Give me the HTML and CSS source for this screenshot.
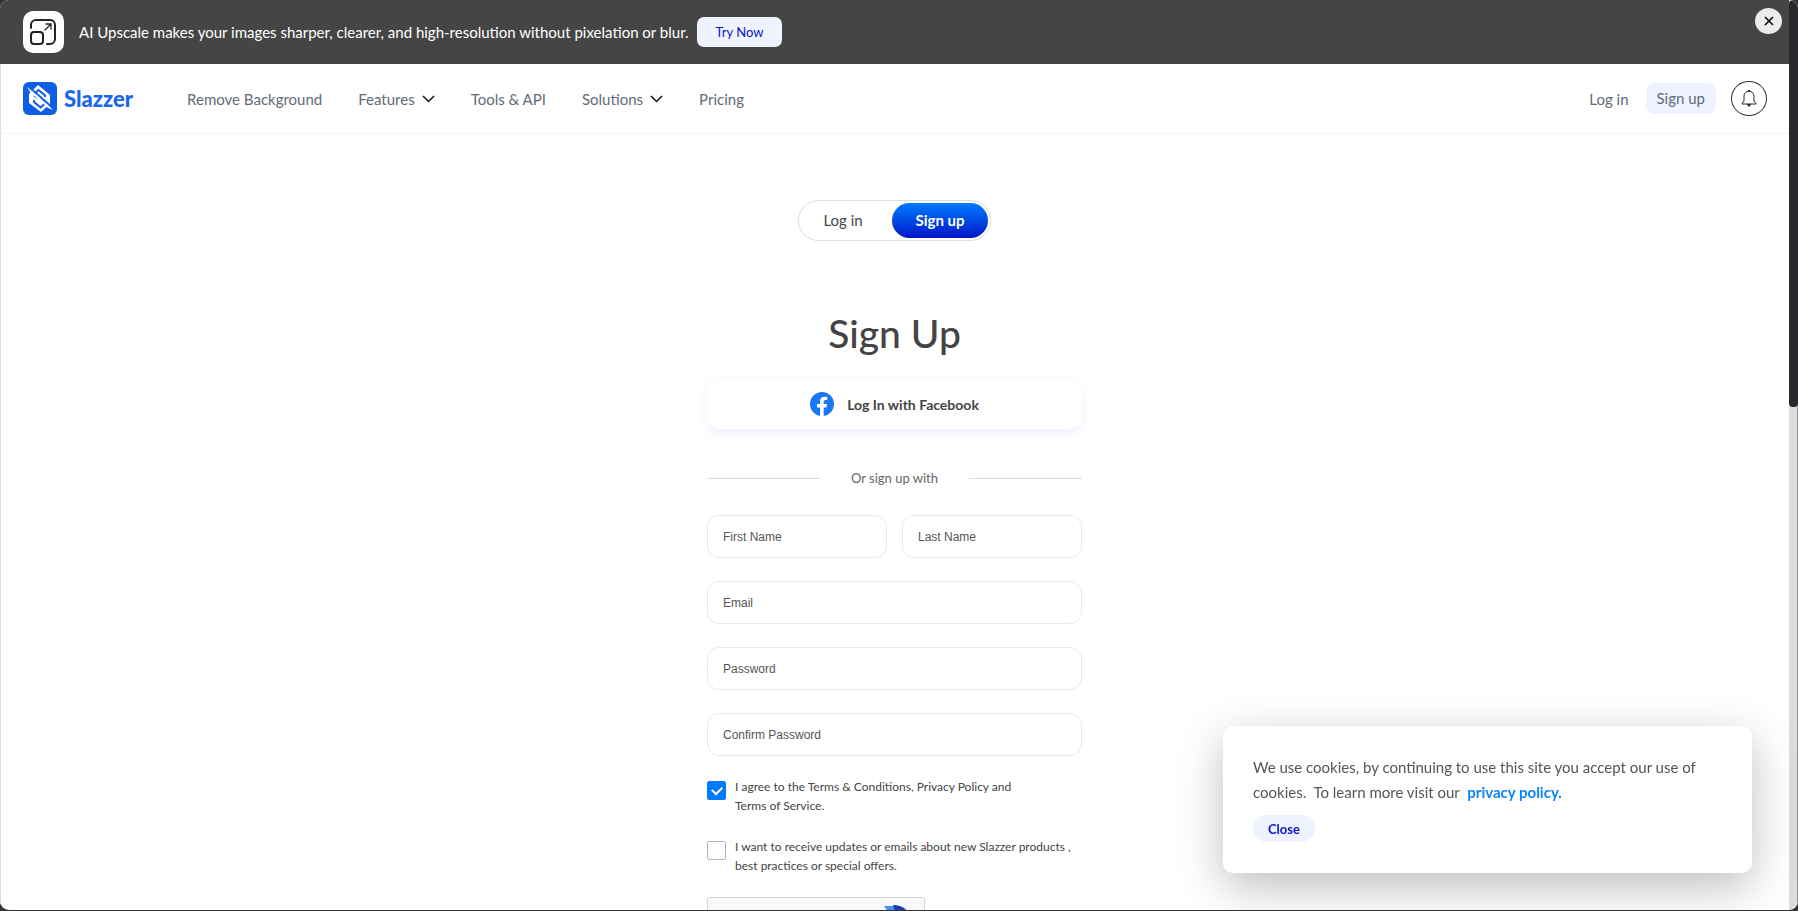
FILE: index.html
```html
<!DOCTYPE html>
<html lang="en">
<head>
    <meta charset="UTF-8">
    <meta name="viewport" content="width=device-width, initial-scale=1.0">
    <title>Sign Up | Slazzer</title>
    <link rel="stylesheet" href="styles.css">
</head>
<body>
    <div class="window">
        <div class="page">
            <div class="banner">
                <svg class="banner-icon" viewBox="0 0 41 42" fill="none" stroke="#222" stroke-width="2" stroke-linecap="round">
                    <rect width="41" height="42" rx="10" fill="#fff" stroke="none"/>
                    <path d="M8 17v-3a5 5 0 0 1 5-5h14a5 5 0 0 1 5 5v14a5 5 0 0 1-5 5h-3"/>
                    <rect x="8" y="21" width="12" height="12" rx="3"/>
                    <path d="M22 19l6-6M23 13h5v5" stroke-width="1.3"/>
                </svg>
                <p class="banner-text">AI Upscale makes your images sharper, clearer, and high-resolution without pixelation or blur.</p>
                <a class="try-now" href="#">Try Now</a>
                <button class="banner-close" type="button" aria-label="Close banner">
                    <svg width="10" height="10" viewBox="0 0 10 10" stroke="#111" stroke-width="1.7"><path d="M1 1l8 8M9 1l-8 8"/></svg>
                </button>
            </div>

            <header class="header">
                <a class="logo" href="#">
                    <svg width="34" height="33" viewBox="0 0 34 33">
                        <rect width="34" height="33" rx="6" fill="#0f5fe4"/>
                        <path d="M15 3L27 13V22L18 30L6 21V12Z" fill="#fff"/>
                        <path d="M22 15V13.500L15.500 8L11.500 11.500V14L21.500 20V22L17.500 25.500L11 20V18" fill="none" stroke="#0f5fe4" stroke-width="2"/>
                        <path d="M5 4L31 27" stroke="#0f5fe4" stroke-width="2"/>
                        <path d="M4 5L8 11L25 26L30 28L26 24L9 9Z" fill="#fff"/>
                    </svg>
                    <span>Slazzer</span>
                </a>
                <nav class="nav">
                    <a href="#">Remove Background</a>
                    <a href="#">Features
                        <svg width="13" height="8" viewBox="0 0 13 8" fill="none" stroke="#111" stroke-width="1.5"><path d="M1 1l5.500 5.500L12 1"/></svg>
                    </a>
                    <a href="#">Tools &amp; API</a>
                    <a href="#">Solutions
                        <svg width="13" height="8" viewBox="0 0 13 8" fill="none" stroke="#111" stroke-width="1.5"><path d="M1 1l5.500 5.500L12 1"/></svg>
                    </a>
                    <a href="#">Pricing</a>
                </nav>
                <div class="account">
                    <a class="login-link" href="#">Log in</a>
                    <a class="signup-link" href="#">Sign up</a>
                    <button class="bell" type="button" aria-label="Notifications">
                        <svg width="16" height="17" viewBox="0 0 16 17" fill="none" stroke="#222" stroke-width="1">
                            <path d="M8 1.200a5 5 0 0 0-5 5V11L1 13.500V14H15V13.500L13 11V6.200a5 5 0 0 0-5-5Z"/>
                            <path d="M6.500 14.500h3l-1.500 2Z" fill="#222"/>
                            <path d="M8 0v1.500" stroke-width="2"/>
                        </svg>
                    </button>
                </div>
            </header>

            <main class="signup">
                <div class="switch">
                    <a href="#">Log in</a>
                    <a class="active" href="#">Sign up</a>
                </div>

                <h1>Sign Up</h1>

                <form class="signup-form">
                    <button class="facebook" type="button">
                        <svg width="24" height="24" viewBox="0 0 24 24">
                            <circle cx="12" cy="12" r="12" fill="#1877f2"/>
                            <path d="M10 24V15.500H7V12h3V9.400C10 6.400 11.800 4.700 14.500 4.700c1.300 0 2.700.2 2.700.2v3h-1.500c-1.500 0-2 .9-2 1.900V12H17l-.5 3.500h-2.800V24Z" fill="#fff"/>
                        </svg>
                        Log In with Facebook
                    </button>

                    <div class="divider"><span>Or sign up with</span></div>

                    <div class="fields">
                        <input type="text" placeholder="First Name" aria-label="First Name">
                        <input type="text" placeholder="Last Name" aria-label="Last Name">
                        <input class="wide" type="email" placeholder="Email" aria-label="Email">
                        <input class="wide" type="password" placeholder="Password" aria-label="Password">
                        <input class="wide" type="password" placeholder="Confirm Password" aria-label="Confirm Password">
                    </div>

                    <div class="check">
                        <input type="checkbox" id="terms" checked>
                        <label for="terms">I agree to the <a href="#">Terms &amp; Conditions</a>, <a href="#">Privacy Policy</a> and<br><a href="#">Terms of Service.</a></label>
                    </div>
                    <div class="check">
                        <input type="checkbox" id="updates">
                        <label for="updates">I want to receive updates or emails about new Slazzer products ,<br>best practices or special offers.</label>
                    </div>

                    <div class="captcha">
                        <svg width="32" height="32" viewBox="0 0 32 32">
                            <path d="M4 1h13l-3 15Z" fill="#4a90f5"/>
                            <path d="M13 0C20 0 26 3 30 9L18 14Z" fill="#1c3aa9"/>
                        </svg>
                    </div>
                </form>
            </main>
        </div>
        <div class="scrollbar"><div class="thumb"></div></div>
    </div>

    <div class="cookies">
        <p>We use cookies, by continuing to use this site you accept our use of cookies.&nbsp; To learn more visit our <a href="#">privacy policy.</a></p>
        <button type="button">Close</button>
    </div>
</body>
</html>
```

FILE: styles.css
```css
* {
    box-sizing: border-box;
    margin: 0;
    padding: 0;
}

body {
    font-family: Lato, "Liberation Sans", sans-serif;
    font-size: 15px;
    color: #444;
    background-color: #333;
}

a {
    color: inherit;
    text-decoration: none;
}

button {
    font-family: inherit;
    border: none;
    cursor: pointer;
}

.window {
    display: flex;
    height: calc(100vh - 1px);
    overflow: hidden;
    background-color: #fff;
    border-radius: 9px;
}

.page {
    flex: 1;
    overflow: hidden;
}

.scrollbar {
    width: 9px;
    background-color: #dcdcdc;
    border-right: 1px solid #999;
}

.thumb {
    width: 9px;
    height: 407px;
    background-color: #29282d;
    border-radius: 4px;
}

/* top banner */
.banner {
    display: flex;
    align-items: center;
    height: 64px;
    padding: 0 7px 0 23px;
    background-color: #454545;
    color: #fff;
}

.banner-icon {
    width: 41px;
    height: 42px;
    margin-right: 15px;
}

.try-now {
    margin-left: 8px;
    padding: 0 19px;
    font-size: 13px;
    line-height: 30px;
    color: #0a14c4;
    background-color: #eff3ff;
    border-radius: 7px;
}

.banner-close {
    display: flex;
    align-items: center;
    justify-content: center;
    align-self: flex-start;
    width: 27px;
    height: 26px;
    margin: 8px 0 0 auto;
    background-color: #ebebeb;
    border-radius: 50%;
}

/* header */
.header {
    display: flex;
    align-items: center;
    height: 70px;
    padding: 0 22px;
    border-left: 1px solid #ddd;
    border-bottom: 1px solid #f2f3fb;
    color: #5f6b78;
}

.logo {
    display: flex;
    align-items: center;
    gap: 7px;
    color: #1a66ee;
    font-size: 22px;
    line-height: 33px;
    font-weight: 900;
}

.nav {
    display: flex;
    gap: 36px;
    margin-left: 54px;
}

.nav a {
    display: flex;
    align-items: center;
    gap: 7px;
}

.account {
    display: flex;
    align-items: center;
    margin-left: auto;
}

.signup-link {
    margin: 0 15px 0 17px;
    padding: 0 11px;
    line-height: 31px;
    background-color: #eff3ff;
    border-radius: 8px;
}

.bell {
    display: flex;
    align-items: center;
    justify-content: center;
    width: 36px;
    height: 35px;
    background: none;
    border: 1px solid #333;
    border-radius: 50%;
}

/* sign up */
.signup {
    display: flex;
    flex-direction: column;
    align-items: center;
    min-height: 100vh;
    padding-top: 66px;
    box-shadow: inset 1px 0 #ddd;
}

.switch {
    display: flex;
    justify-content: space-between;
    width: 193px;
    padding: 2px;
    border: 1px solid #ddd;
    border-radius: 21px;
}

.switch a {
    width: 96px;
    line-height: 35px;
    text-align: center;
    border-radius: 18px;
}

.switch a:first-child {
    width: 84px;
}

.switch .active {
    color: #fff;
    font-weight: 700;
    background: linear-gradient(#007bff, #0016c8);
}

h1 {
    margin: 69px 0 23px;
    font-size: 39px;
    font-weight: 500;
    line-height: 46px;
}

.signup-form {
    width: 375px;
}

.facebook {
    display: flex;
    align-items: center;
    justify-content: center;
    gap: 13px;
    width: 100%;
    height: 50px;
    color: #444;
    font-size: 14px;
    font-weight: 700;
    background-color: #fff;
    border-radius: 14px;
    box-shadow: 0 4px 12px rgba(80, 90, 255, 0.1);
}

.divider {
    display: flex;
    align-items: center;
    justify-content: space-between;
    margin: 39px 0 27px;
    font-size: 13px;
    line-height: 20px;
    color: #666;
}

.divider::before,
.divider::after {
    content: "";
    width: 113px;
    height: 1px;
    background-color: #d9dddd;
}

.fields {
    display: grid;
    grid-template-columns: 1fr 1fr;
    gap: 23px 15px;
    margin-bottom: 21px;
}

.fields input {
    min-width: 0;
    height: 43px;
    padding: 0 15px;
    font-family: "Liberation Sans", sans-serif;
    font-size: 12px;
    border: 1px solid #e9e9e9;
    border-radius: 12px;
    outline: none;
}

.fields input::placeholder {
    color: #555;
}

.fields .wide {
    grid-column: span 2;
}

.check {
    display: flex;
    gap: 9px;
    margin-bottom: 22px;
    font-size: 12px;
    line-height: 19px;
}

.check input {
    flex: none;
    display: flex;
    align-items: center;
    justify-content: center;
    appearance: none;
    width: 19px;
    height: 19px;
    margin-top: 4px;
    border: 1px solid #adb5bd;
    border-radius: 2px;
}

.check input:checked {
    background-color: #007bff;
    border-color: #007bff;
}

.check input:checked::before {
    content: "";
    width: 8px;
    height: 5px;
    border-left: 2px solid #fff;
    border-bottom: 2px solid #fff;
    transform: translateY(-1px) rotate(-45deg);
}

.captcha {
    width: 218px;
    height: 56px;
    padding: 7px 12px;
    text-align: right;
    background-color: #f9f9f9;
    border: 1px solid #d3d3d3;
    border-radius: 2px;
}

/* cookie notice */
.cookies {
    position: fixed;
    right: 46px;
    bottom: 38px;
    width: 529px;
    padding: 29px 30px 31px;
    background-color: #fff;
    border-radius: 10px;
    box-shadow: 0 14px 46px rgba(0, 0, 0, 0.26);
    color: #555;
    line-height: 25px;
}

.cookies a {
    margin-left: 4px;
    color: #0a84ff;
    font-weight: 700;
}

.cookies button {
    display: block;
    height: 27px;
    margin-top: 10px;
    padding: 0 15px;
    font-size: 13px;
    font-weight: 700;
    color: #0a14c4;
    background-color: #eff3ff;
    border-radius: 14px;
}
```
